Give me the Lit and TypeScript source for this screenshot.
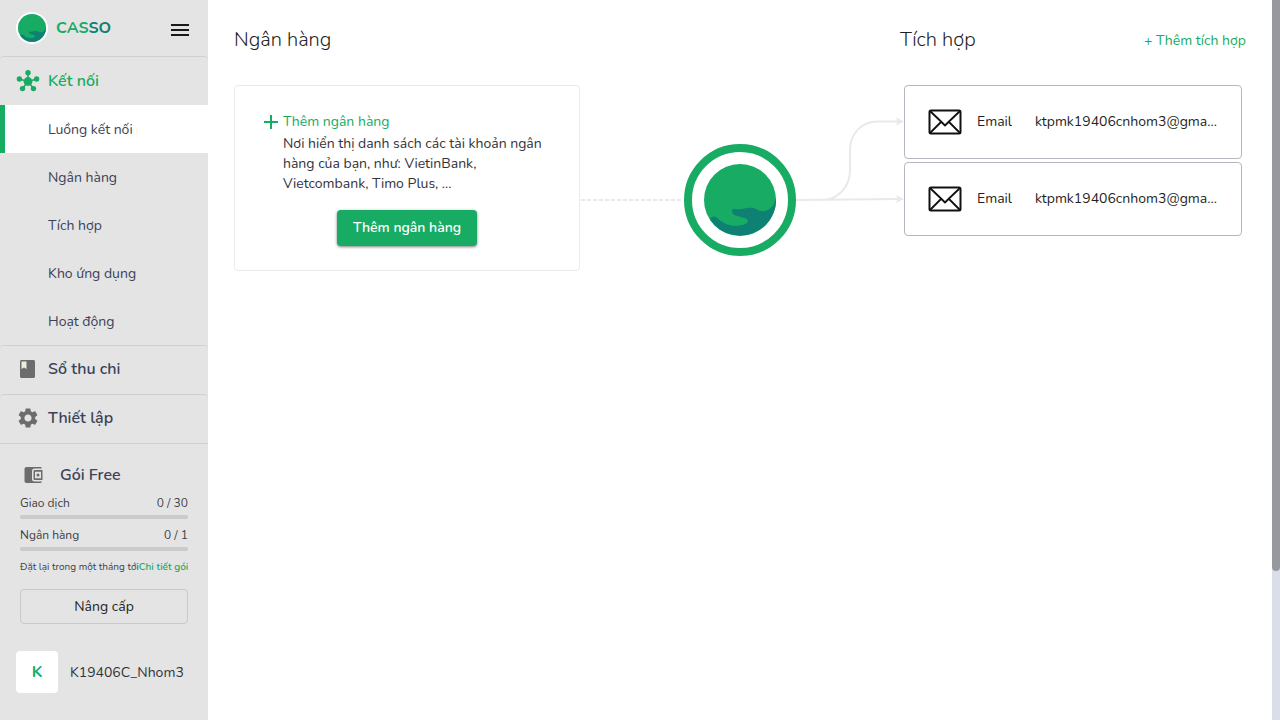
import { LitElement, html, css } from "lit";
import { customElement, property } from "lit/decorators.js";

const plan = [
  { label: "Giao dịch", used: 0, max: 30 },
  { label: "Ngân hàng", used: 0, max: 1 },
];

const subItems = ["Luồng kết nối", "Ngân hàng", "Tích hợp", "Kho ứng dụng", "Hoạt động"];

const integrations = [
  { type: "Email", name: "ktpmk19406cnhom3@gma..." },
  { type: "Email", name: "ktpmk19406cnhom3@gma..." },
];

@customElement("casso-logo")
export class CassoLogo extends LitElement {
  static styles = css`
    :host { display: block; }
    svg { display: block; width: 100%; height: 100%; }
    .ball { fill: #18ab63; }
    .wave { fill: #0e8074; }
  `;
  render() {
    return html`<svg viewBox="0 0 212 212" aria-hidden="true">
      <circle class="ball" cx="106" cy="106" r="106" />
      <path class="wave" d="M212 96 A106 106 0 0 1 20 166 Q17 160 22 157 Q30 151 38 158 C56 175 76 183 98 182 C116 181 129 176 129 168 C129 160 115 158 101 154 C88 151 82 145 82 139 Q82 132 89 132 C110 137 120 128 140 129 C154 131 160 139 174 139 C194 138 210 122 212 96 Z" />
    </svg>`;
  }
}

@customElement("casso-sidebar")
export class CassoSidebar extends LitElement {
  static styles = css`
    :host { display: flex; flex-direction: column; background: #e4e4e4; color: #3c4257; }
    a { color: inherit; text-decoration: none; }
    button { font: inherit; cursor: pointer; }
    .head { display: flex; align-items: center; height: 56px; padding: 0 16px; }
    .brand { display: flex; align-items: center; gap: 8px; flex: 1; }
    .logo { width: 28px; height: 28px; border: 2px solid #fff; border-radius: 50%; }
    .name { font-size: 16px; font-weight: 700; color: #18ab63; }
    .name span { color: #0e8074; }
    .menu { border: 0; background: none; padding: 0; margin-top: 4px; width: 24px; height: 24px; }
    .menu svg { display: block; }
    .section { display: flex; align-items: center; gap: 8px; box-sizing: border-box; height: 49px; padding: 0 16px 2px; border-top: 1px solid #d0d0d0; border-radius: 4px 4px 0 0; font-size: 16px; font-weight: 600; }
    .section svg { width: 24px; height: 24px; fill: #6c6c6c; }
    .section.on { padding-bottom: 0; color: #18ab63; }
    .section.on svg { fill: #18ab63; stroke: #18ab63; }
    ul { list-style: none; margin: 0; padding: 0; }
    .item { display: flex; align-items: center; height: 48px; padding-left: 43px; border-left: 5px solid transparent; font-size: 14px; }
    .item.on { background: #fff; border-color: #18ab63; }
    .plan { border-top: 1px solid #d0d0d0; padding: 19px 20px 0; color: #3f3f46; }
    .title { display: flex; align-items: center; gap: 14px; height: 24px; padding-left: 2px; font-size: 16px; font-weight: 600; color: #3c4257; }
    .title svg { width: 24px; height: 24px; fill: #6c6c6c; }
    .row { display: flex; justify-content: space-between; align-items: center; height: 20px; margin-top: 6px; font-size: 12px; }
    .bar { height: 4px; margin-top: 2px; border-radius: 2px; background: #cbcbcb; overflow: hidden; }
    .fill { height: 100%; background: #18ab63; }
    .reset { display: flex; justify-content: space-between; align-items: center; height: 20px; margin-top: 6px; font-size: 10px; white-space: nowrap; }
    .reset a { color: #18ab63; font-weight: 600; }
    .upgrade { display: block; width: 100%; height: 35px; margin-top: 12px; padding: 0; border: 1px solid #c9c9c9; border-radius: 4px; background: none; color: #1f1f24; font-size: 14px; }
    .user { display: flex; align-items: center; gap: 12px; padding: 27px 16px; font-size: 14px; color: #33333a; }
    .avatar { display: grid; place-items: center; width: 42px; height: 42px; border-radius: 4px; background: #fff; color: #18ab63; font-size: 16px; font-weight: 700; }
  `;
  render() {
    return html`
      <header class="head">
        <a class="brand" href="#"><casso-logo class="logo"></casso-logo><span class="name">CAS<span>SO</span></span></a>
        <button class="menu" aria-label="Menu"><svg width="24" height="24" viewBox="0 0 24 24"><path fill="#1a1a1a" d="M3 18h18v-2H3zm0-5h18v-2H3zm0-7v2h18V6z" /></svg></button>
      </header>
      <nav>
        <a class="section on" href="#">
          <svg viewBox="0 0 24 24" stroke-width="1.6"><path d="M12 12.500V4M12 12.500 3.500 10M12 12.500l8.500-2.500M12 12.500l-5.500 7M12 12.500l5.500 7" /><g stroke="none"><circle cx="12" cy="12.500" r="4.400" /><circle cx="12" cy="3.800" r="2.700" /><circle cx="3.400" cy="10" r="2.700" /><circle cx="20.600" cy="10" r="2.700" /><circle cx="6.500" cy="19.600" r="2.700" /><circle cx="17.500" cy="19.600" r="2.700" /></g></svg>
          Kết nối</a>
        <ul>
          ${subItems.map((t, i) => html`<li><a class="item ${i === 0 ? "on" : ""}" href="#">${t}</a></li>`)}
        </ul>
        <a class="section" href="#">
          <svg viewBox="0 0 24 24"><path d="M17.500 3h-12C4.700 3 4 3.700 4 4.500v15c0 .8.7 1.500 1.500 1.500h12c.8 0 1.500-.7 1.500-1.500v-15c0-.8-.7-1.500-1.500-1.500z" /><path fill="#ececdf" d="M5.500 4.500h5v7.500L8 10.500 5.500 12z" /></svg>
          Sổ thu chi</a>
        <a class="section" href="#">
          <svg viewBox="0 0 24 24"><path d="M19.140 12.940c.04-.3.06-.61.06-.94 0-.32-.02-.64-.07-.94l2.030-1.580c.18-.14.23-.41.12-.61l-1.920-3.320c-.12-.22-.37-.29-.59-.22l-2.390.96c-.5-.38-1.030-.7-1.620-.94l-.36-2.540c-.04-.24-.24-.41-.48-.41h-3.840c-.24 0-.43.17-.47.41l-.36 2.540c-.59.24-1.130.57-1.620.94l-2.390-.96c-.22-.08-.47 0-.59.22L2.740 8.870c-.12.21-.08.47.12.61l2.030 1.580c-.05.3-.09.63-.09.94s.02.64.07.94l-2.030 1.580c-.18.14-.23.41-.12.61l1.920 3.320c.12.22.37.29.59.22l2.390-.96c.5.38 1.030.7 1.620.94l.36 2.540c.05.24.24.41.48.41h3.840c.24 0 .44-.17.47-.41l.36-2.540c.59-.24 1.130-.56 1.620-.94l2.390.96c.22.08.47 0 .59-.22l1.920-3.320c.12-.22.07-.47-.12-.61zM12 15.600c-1.980 0-3.600-1.620-3.600-3.600s1.620-3.600 3.600-3.600 3.600 1.620 3.600 3.600-1.620 3.600-3.600 3.600z" /></svg>
          Thiết lập</a>
      </nav>
      <section class="plan">
        <div class="title">
          <svg viewBox="0 0 24 24"><path d="M18 4H4.500C3.400 4 2.500 4.900 2.500 6v12c0 1.100.9 2 2 2H18c1.100 0 2-.7 2-1.500h-7.500c-1.700 0-2.500-1-2.500-2.500V8c0-1.500.9-2.500 2.500-2.500H20C20 4.700 19.100 4 18 4z" /><path fill-rule="evenodd" d="M13 7h7.500v10H13c-1 0-1.500-.5-1.500-1.500v-7C11.500 7.500 12 7 13 7zm0 1.700v6.600h6V8.700zm3 1.800a1.500 1.500 0 1 1 0 3 1.500 1.500 0 0 1 0-3z" /></svg>
          Gói Free
        </div>
        ${plan.map((p) => html`<div class="quota">
          <div class="row"><span>${p.label}</span><span>${p.used} / ${p.max}</span></div>
          <div class="bar"><div class="fill" style="width:${(p.used / p.max) * 100}%"></div></div>
        </div>`)}
        <div class="reset"><span>Đặt lại trong một tháng tới</span><a href="#">Chi tiết gói</a></div>
        <button class="upgrade">Nâng cấp</button>
      </section>
      <footer class="user"><div class="avatar">K</div><span>K19406C_Nhom3</span></footer>
    `;
  }
}

@customElement("integration-card")
export class IntegrationCard extends LitElement {
  @property() type = "";
  @property() name = "";
  static styles = css`
    :host { display: block; }
    .card { display: flex; align-items: center; height: 72px; padding: 0 23px; border: 1px solid #b4b6c0; border-radius: 4px; background: #fff; font-size: 14px; color: #1f1f24; }
    svg { flex: none; width: 34px; height: 26px; }
    span { padding-bottom: 2px; }
    .type { flex: none; width: 58px; margin-left: 15px; }
    .name { white-space: nowrap; }
  `;
  render() {
    return html`<article class="card">
      <svg viewBox="0 0 34 26" fill="none" stroke="#111" stroke-width="2" stroke-linejoin="round" aria-hidden="true"><rect x="1.500" y="1.500" width="31" height="23" rx="1.500" /><path stroke-width="1.800" d="M2 2l11 10.500 4 4 4-4L32 2M2 24l11-11M32 24 21 13" /></svg>
      <span class="type">${this.type}</span><span class="name">${this.name}</span>
    </article>`;
  }
}

@customElement("app-root")
export class AppRoot extends LitElement {
  static styles = css`
    :host { display: grid; grid-template-columns: 208px minmax(0, 1fr) 8px; min-height: 100vh; background: #fff; font-family: Nunito, Roboto, "Noto Sans", sans-serif; color: #33333a; }
    a { color: #18ab63; text-decoration: none; }
    main { display: grid; grid-template-columns: 346px minmax(240px, 1fr) 346px; align-content: start; padding: 24px 26px; }
    h2 { margin: 0; font-size: 20px; line-height: 32px; font-weight: 300; color: #1f1f24; }
    .head { display: flex; justify-content: space-between; align-items: center; height: 32px; margin-bottom: 29px; font-size: 14px; }
    .bank { box-sizing: border-box; padding: 26px 28px 24px; border: 1px solid #ebebeb; border-radius: 4px; font-size: 14px; line-height: 20px; }
    .add { display: flex; align-items: center; gap: 4px; margin-bottom: 2px; }
    .bank p { margin: 0; padding-left: 20px; }
    .cta { display: block; height: 36px; margin: 16px auto 0; padding: 0 16px; border: 0; border-radius: 4px; background: #18ab63; color: #fff; font: inherit; font-weight: 600; box-shadow: 0 1px 3px rgba(0, 0, 0, 0.5); cursor: pointer; }
    .flow { display: grid; grid-template-columns: minmax(0, 1fr) 112px minmax(0, 1fr); align-items: center; height: 112px; margin-top: 59px; }
    .dash { height: 2px; margin: 0 3px 0 1px; background: repeating-linear-gradient(90deg, #e9e9e9 0 4px, transparent 4px 6px); }
    .hub { box-sizing: border-box; height: 112px; padding: 12px; border: 8px solid #18ab63; border-radius: 50%; background: #fff; }
    .out { width: 100%; height: 112px; overflow: visible; }
    .list { display: grid; gap: 3px; align-content: start; padding: 0 4px; }
    .track { background: #dadee8; }
    .thumb { height: 79.3vh; background: #98999e; border-radius: 0 0 4px 4px; }
  `;
  render() {
    return html`
      <casso-sidebar></casso-sidebar>
      <main>
        <div class="head"><h2>Ngân hàng</h2></div>
        <div></div>
        <div class="head"><h2>Tích hợp</h2><a href="#">+ Thêm tích hợp</a></div>
        <section class="bank">
          <a class="add" href="#"><svg width="16" height="16" viewBox="0 0 16 16" stroke="#18ab63" stroke-width="2"><path d="M1 8h14M8 1v14" /></svg>Thêm ngân hàng</a>
          <p>Nơi hiển thị danh sách các tài khoản ngân hàng của bạn, như: VietinBank, Vietcombank, Timo Plus, ...</p>
          <button class="cta">Thêm ngân hàng</button>
        </section>
        <div class="flow">
          <div class="dash"></div>
          <casso-logo class="hub"></casso-logo>
          <svg class="out" viewBox="0 0 104 112" fill="none" stroke="#e9e9e9" stroke-width="2" aria-hidden="true">
            <path d="M0 56 L102 55M26 56C42 56 54 43 54 26V6C54 -11 66 -22.500 82 -22.500H102" />
            <path fill="#e9e9e9" stroke="none" d="M100 -26.500l8 4-8 4 1.500-4zM100 51l8 4-8 4 1.500-4z" />
          </svg>
        </div>
        <section class="list">
          ${integrations.map((i) => html`<integration-card .type=${i.type} .name=${i.name}></integration-card>`)}
        </section>
      </main>
      <div class="track"><div class="thumb"></div></div>
    `;
  }
}
